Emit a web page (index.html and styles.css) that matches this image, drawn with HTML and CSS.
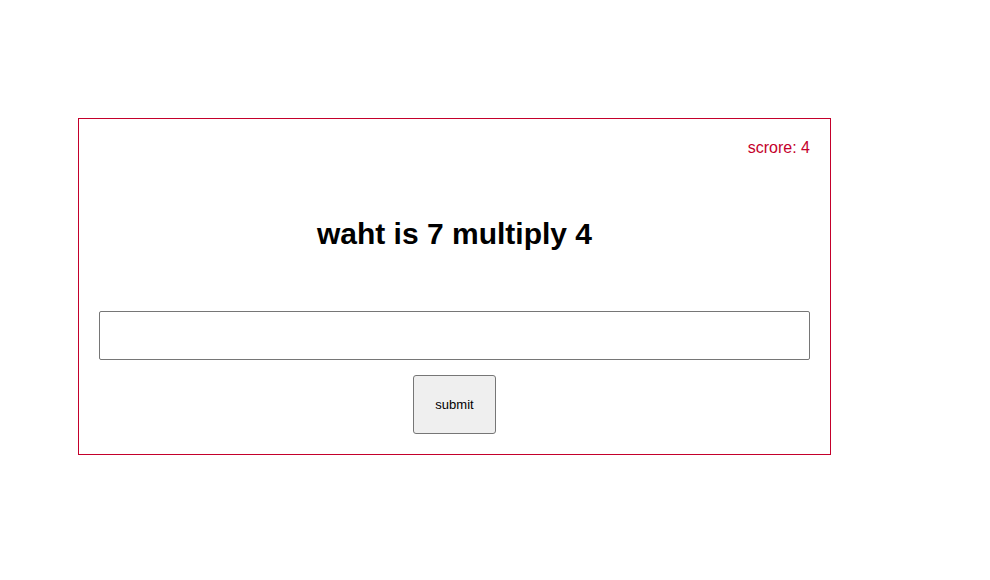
FILE: index.html
```html
<!DOCTYPE html>
<html>
<head>
<meta charset="utf-8">
<link rel="stylesheet" href="styles.css">
</head>
<body>
<div class="page">
  <div class="quiz">
    <div class="score">scrore: 4</div>
    <h1 class="question">waht is 7 multiply 4</h1>
    <input class="answer" type="text">
    <div class="actions">
      <button class="submit">submit</button>
    </div>
  </div>
</div>
</body>
</html>
```
FILE: styles.css
```css
html, body {
  margin: 0;
  padding: 0;
  background: #fff;
}
body {
  font-family: "Liberation Sans", Arial, sans-serif;
}
.page {
  padding: 118px 0 0 78px;
}
.quiz {
  width: 753px;
  box-sizing: border-box;
  border: 1px solid #c4002b;
  padding: 20px;
}
.score {
  text-align: right;
  color: #c4002b;
  font-size: 16px;
  line-height: 18px;
}
.question {
  margin: 61px 0 61px;
  font-size: 30px;
  line-height: 32px;
  font-weight: bold;
  text-align: center;
  color: #000;
}
.answer {
  display: block;
  width: 100%;
  height: 49px;
  box-sizing: border-box;
  margin: 0;
  border: 1px solid #767676;
  border-radius: 2px;
  padding: 0 4px;
  font-size: 16px;
  background: #fff;
}
.actions {
  display: flex;
  justify-content: center;
  margin-top: 15px;
}
.submit {
  width: 83px;
  height: 59px;
  box-sizing: border-box;
  border: 1px solid #767676;
  border-radius: 3px;
  background: #efefef;
  font-family: "Liberation Sans", Arial, sans-serif;
  font-size: 13px;
  color: #000;
  padding: 0;
}
```
